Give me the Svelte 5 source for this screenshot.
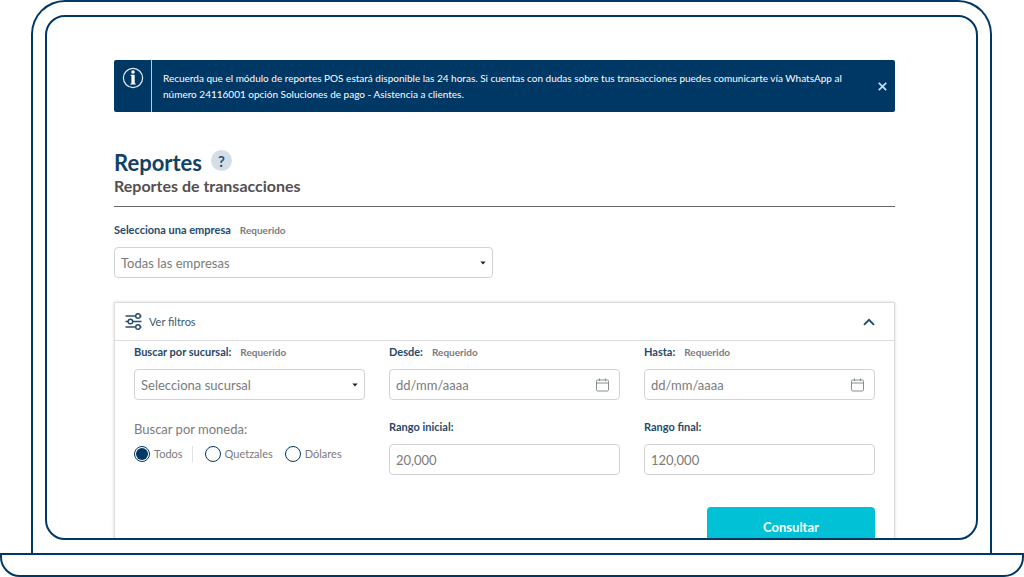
<script lang="ts">
  type Currency = { value: string; label: string };

  const currencies: Currency[] = [
    { value: 'todos', label: 'Todos' },
    { value: 'gtq', label: 'Quetzales' },
    { value: 'usd', label: 'Dólares' }
  ];

  let showNotice = $state(true);
  let showFilters = $state(true);
  let currency = $state('todos');
  let company = $state('');
  let branch = $state('');
  let from = $state('');
  let to = $state('');
  let min = $state('');
  let max = $state('');
</script>

{#snippet caret()}
  <svg class="caret" width="6" height="4" viewBox="0 0 6 4" aria-hidden="true">
    <path d="M0.4 0.4h5.2L3 3.6z" fill="#222" />
  </svg>
{/snippet}

{#snippet calendar()}
  <svg width="13" height="14" viewBox="0 0 13 14" fill="none" stroke="#84908c" aria-hidden="true">
    <rect x="0.5" y="2" width="12" height="11" rx="1.2" />
    <path d="M0.5 5h12M3.5 0.5v2.6M9.5 0.5v2.6" />
  </svg>
{/snippet}

<div class="laptop">
  <div class="lid">
    <main class="screen">
      {#if showNotice}
        <div class="notice" role="status">
          <div class="notice-icon">
            <svg width="22" height="22" viewBox="0 0 22 22" fill="none" aria-hidden="true">
              <circle cx="11" cy="11" r="9.6" stroke="#dfe9f2" stroke-width="1.2" />
              <circle cx="11" cy="5" r="1.8" fill="#fff" />
              <path d="M8.6 7.8h4.1v8.6h1v1H8.4v-1h1v-7.6h-.8z" fill="#fff" />
            </svg>
          </div>
          <p class="notice-text">
            Recuerda que el módulo de reportes POS estará disponible las 24 horas. Si cuentas con dudas
            sobre tus transacciones puedes comunicarte vía WhatsApp al número 24116001 opción Soluciones
            de pago - Asistencia a clientes.
          </p>
          <button class="notice-close" type="button" aria-label="Cerrar" onclick={() => (showNotice = false)}>
            <svg width="9" height="9" viewBox="0 0 9 9" stroke="#c9d8e6" stroke-width="1.8" aria-hidden="true">
              <path d="M0.8 0.8l7.4 7.4M8.2 0.8L0.8 8.2" />
            </svg>
          </button>
        </div>
      {/if}

      <header class="heading">
        <div class="heading-row">
          <h1>Reportes</h1>
          <button class="help" type="button" aria-label="Ayuda">?</button>
        </div>
        <h2>Reportes de transacciones</h2>
      </header>

      <div class="field company">
        <div class="field-label">
          <label for="company">Selecciona una empresa</label>
          <small>Requerido</small>
        </div>
        <div class="control">
          <select id="company" bind:value={company}>
            <option value="">Todas las empresas</option>
          </select>
          {@render caret()}
        </div>
      </div>

      <section class="panel">
        <button
          class="panel-toggle"
          type="button"
          aria-expanded={showFilters}
          onclick={() => (showFilters = !showFilters)}
        >
          <svg width="17" height="17" viewBox="0 0 17 17" fill="none" stroke="#285172" stroke-width="1.5" aria-hidden="true">
            <path d="M0.5 3h10M0.5 8.5h2.6M7.7 8.5h8.8M0.5 14h10M15.4 3h1.1M15.4 14h1.1" />
            <circle cx="13" cy="3" r="2.3" />
            <circle cx="5.4" cy="8.5" r="2.3" />
            <circle cx="13" cy="14" r="2.3" />
          </svg>
          <span>Ver filtros</span>
          <svg class="chevron" class:closed={!showFilters} width="12" height="8" viewBox="0 0 12 8" fill="none" stroke="#1f4a6b" stroke-width="1.9" aria-hidden="true">
            <path d="M1 6.8l5-5 5 5" />
          </svg>
        </button>

        {#if showFilters}
          <form class="filters" onsubmit={(e) => e.preventDefault()}>
            <div class="field">
              <div class="field-label">
                <label for="branch">Buscar por sucursal:</label>
                <small>Requerido</small>
              </div>
              <div class="control">
                <select id="branch" bind:value={branch}>
                  <option value="">Selecciona sucursal</option>
                </select>
                {@render caret()}
              </div>
            </div>

            <div class="field">
              <div class="field-label">
                <label for="from">Desde:</label>
                <small>Requerido</small>
              </div>
              <div class="control">
                <input id="from" type="text" placeholder="dd/mm/aaaa" bind:value={from} />
                <button class="pick" type="button" aria-label="Elegir fecha inicial">{@render calendar()}</button>
              </div>
            </div>

            <div class="field">
              <div class="field-label">
                <label for="to">Hasta:</label>
                <small>Requerido</small>
              </div>
              <div class="control">
                <input id="to" type="text" placeholder="dd/mm/aaaa" bind:value={to} />
                <button class="pick" type="button" aria-label="Elegir fecha final">{@render calendar()}</button>
              </div>
            </div>

            <fieldset class="currency">
              <legend>Buscar por moneda:</legend>
              <div class="radios">
                {#each currencies as item (item.value)}
                  <label class="radio">
                    <input type="radio" name="currency" value={item.value} bind:group={currency} />
                    {item.label}
                  </label>
                {/each}
              </div>
            </fieldset>

            <div class="field">
              <div class="field-label">
                <label for="min">Rango inicial:</label>
              </div>
              <div class="control">
                <input id="min" type="text" placeholder="20,000" bind:value={min} />
              </div>
            </div>

            <div class="field">
              <div class="field-label">
                <label for="max">Rango final:</label>
              </div>
              <div class="control">
                <input id="max" type="text" placeholder="120,000" bind:value={max} />
              </div>
            </div>

            <button class="submit" type="submit">Consultar</button>
          </form>
        {/if}
      </section>
    </main>
  </div>
  <div class="base"></div>
</div>

<style>
  :global(body) {
    background: #fff;
  }

  .laptop {
    --navy: #003865;
    --label: #1f4a6b;
    --muted: #7b7b7b;
    --line: #d3d3d3;

    display: flex;
    flex-direction: column;
    height: 100vh;
    font-family: Lato, 'Liberation Sans', sans-serif;
    font-size: 11px;
    line-height: 16px;
    color: var(--muted);
  }

  .laptop :is(button, input, select) {
    font: inherit;
    color: inherit;
  }

  .laptop button {
    border: 0;
    padding: 0;
    background: none;
    cursor: pointer;
  }

  svg {
    display: block;
    flex-shrink: 0;
  }

  /* Laptop frame */
  .lid {
    flex: 1;
    min-height: 0;
    display: flex;
    margin: 0 32px 0 31px;
    padding: 13px 12px;
    border: 2px solid var(--navy);
    border-bottom: 0;
    border-radius: 34px 34px 0 0;
  }

  .base {
    flex-shrink: 0;
    height: 20px;
    border: 2px solid var(--navy);
    border-radius: 0 0 20px 20px;
  }

  .screen {
    flex: 1;
    min-width: 0;
    padding: 43px 81px 0 67px;
    border: 2px solid var(--navy);
    border-radius: 20px;
    overflow: hidden;
  }

  /* Notice */
  .notice {
    display: flex;
    border-radius: 2px;
    background: var(--navy);
    color: #fff;
  }

  .notice-icon {
    padding: 7px 7px 0 8px;
    border-right: 1px solid #b9c9d8;
  }

  .notice-text {
    flex: 1;
    margin: 0;
    padding: 10px 24px 10px 11px;
    font-size: 10px;
  }

  .laptop .notice-close {
    padding: 0 8px;
  }

  /* Heading */
  .heading {
    margin-top: 37px;
    padding-bottom: 11px;
    border-bottom: 1px solid #6b6767;
  }

  .heading-row {
    display: flex;
    align-items: center;
    gap: 9px;
  }

  h1,
  h2 {
    margin: 0;
    font-weight: 700;
  }

  h1 {
    font-size: 22px;
    line-height: 28px;
    color: #124168;
  }

  h2 {
    font-size: 16px;
    line-height: 18px;
    color: #55504f;
  }

  .laptop .help {
    width: 21px;
    height: 21px;
    margin-bottom: 5px;
    border-radius: 50%;
    background: #d5dee7;
    color: #2c5279;
    font-size: 15px;
    font-weight: 700;
  }

  /* Fields */
  .field-label {
    display: flex;
    align-items: center;
    gap: 9px;
    margin-bottom: 9px;
    font-weight: 700;
  }

  .field-label label {
    color: var(--label);
  }

  .field-label small {
    font-size: 10px;
  }

  .control {
    position: relative;
  }

  .control input,
  .control select {
    display: block;
    box-sizing: border-box;
    width: 100%;
    height: 31px;
    padding: 0 28px 0 6px;
    border: 1px solid var(--line);
    border-radius: 4px;
    background: #fff;
    appearance: none;
    font-size: 13px;
  }

  .control input::placeholder {
    color: var(--muted);
    opacity: 1;
  }

  .caret,
  .laptop .pick {
    position: absolute;
    top: 0;
    bottom: 0;
    margin: auto 0;
  }

  .caret {
    right: 7px;
    pointer-events: none;
  }

  .laptop .pick {
    right: 11px;
  }

  .company {
    width: 49%;
    max-width: 379px;
    margin-top: 15px;
  }

  /* Filter panel */
  .panel {
    margin-top: 24px;
    border: 1px solid #dcdcdc;
    box-shadow: 0 0 3px rgba(0, 0, 0, 0.16);
  }

  .laptop .panel-toggle {
    display: flex;
    align-items: center;
    gap: 7px;
    width: 100%;
    height: 38px;
    padding: 0 19px 0 10px;
    border-bottom: 1px solid #dcdcdc;
    color: #3b5a72;
  }

  .chevron {
    margin-left: auto;
  }

  .chevron.closed {
    transform: rotate(180deg);
  }

  .filters {
    display: grid;
    grid-template-columns: repeat(3, 1fr);
    gap: 19px 24px;
    padding: 3px 19px 24px;
  }

  .currency {
    min-width: 0;
    margin: 0;
    padding: 0;
    border: 0;
  }

  legend {
    padding: 2px 0 0;
    font-size: 13px;
    line-height: 16px;
  }

  .radios {
    display: flex;
    gap: 12px;
    margin-top: 9px;
  }

  .radio {
    display: flex;
    align-items: center;
    gap: 4px;
  }

  .radio:first-child {
    padding-right: 9px;
    border-right: 1px solid #e2e2e2;
  }

  .radio input {
    flex-shrink: 0;
    width: 16px;
    height: 16px;
    margin: 0;
    border: 1px solid var(--navy);
    border-radius: 50%;
    appearance: none;
  }

  .radio input:checked {
    background: var(--navy);
    background-clip: content-box;
    padding: 1px;
  }

  .laptop .submit {
    grid-column: 3;
    justify-self: end;
    width: 168px;
    height: 40px;
    margin-top: 13px;
    border-radius: 4px;
    background: #00c1d5;
    color: #fff;
    font-size: 13px;
    font-weight: 700;
  }
</style>
